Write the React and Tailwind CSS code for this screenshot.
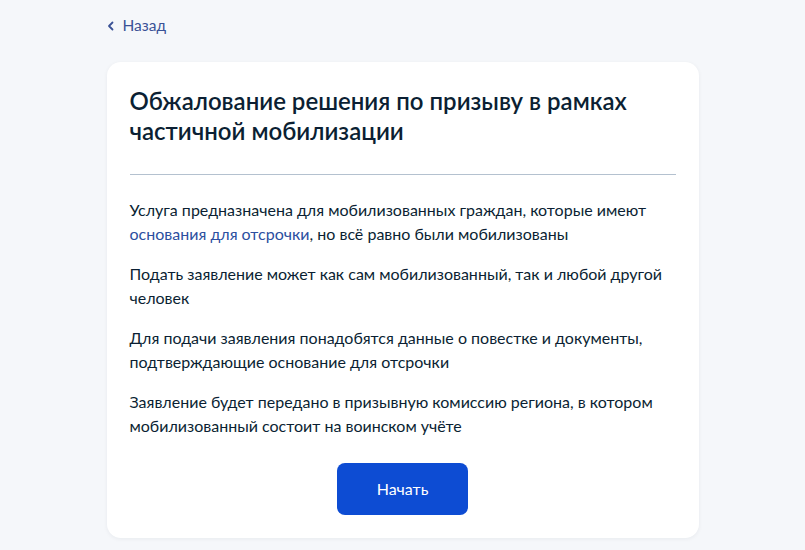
export default function App() {
  const paragraphs = [
    <>
      Услуга предназначена для мобилизованных граждан, которые имеют{' '}
      <a href="#" className="text-[#2c4fa0]">основания для отсрочки</a>, но всё равно были мобилизованы
    </>,
    'Подать заявление может как сам мобилизованный, так и любой другой человек',
    'Для подачи заявления понадобятся данные о повестке и документы, подтверждающие основание для отсрочки',
    'Заявление будет передано в призывную комиссию региона, в котором мобилизованный состоит на воинском учёте',
  ];

  return (
    <div className="min-h-[550px] bg-[#f5f7fa] font-['Lato','Liberation_Sans',sans-serif] text-[#0b1f33]">
      <div className="w-[592px] mx-auto pt-[14px]">
        <a href="#" className="flex items-center gap-[8px] h-[24px] text-[15.5px] text-[#3a5296]">
          <svg width="8" height="10" viewBox="0 0 8 10" fill="none">
            <path d="M5.5 1.5L2 5l3.5 3.5" stroke="currentColor" strokeWidth="1.8" strokeLinecap="round" strokeLinejoin="round" />
          </svg>
          Назад
        </a>
        <div className="mt-[24px] bg-white rounded-[14px] shadow-[0_1px_4px_rgba(11,31,51,0.06)] px-[23px] pt-[24px] pb-[23px]">
          <h1 className="text-[24px] leading-[30px] font-semibold pr-[30px]">
            Обжалование решения по призыву в рамках частичной мобилизации
          </h1>
          <div className="mt-[28px] h-px bg-[#b4c1cf]" />
          <div className="mt-[23px] flex flex-col gap-[16px] text-[16px] leading-[24px]">
            {paragraphs.map((p, i) => (
              <p key={i}>{p}</p>
            ))}
          </div>
          <div className="mt-[25px] flex justify-center">
            <button className="w-[131px] h-[52px] rounded-[8px] bg-[#0d4cd3] text-white text-[16px]">
              Начать
            </button>
          </div>
        </div>
      </div>
    </div>
  );
}
